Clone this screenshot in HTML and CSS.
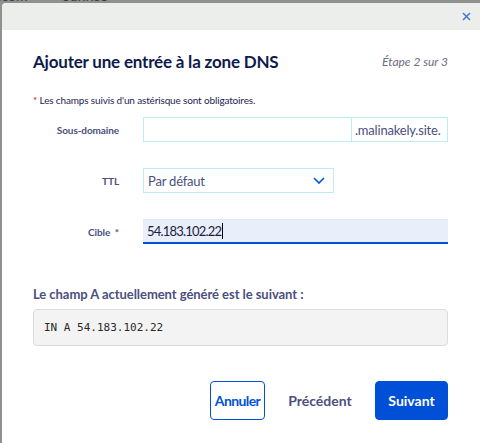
FILE: index.html
```html
<!DOCTYPE html>
<html lang="fr">
<head>
<meta charset="utf-8">
<link rel="stylesheet" href="styles.css">
</head>
<body>
<div class="bgnav"><span class="bg1">ecom</span><span class="bg2">Sunrise</span></div>
<div class="modal">
  <div class="modal-head">
    <svg class="close" width="9" height="9" viewBox="0 0 9 9"><path d="M1 1L8 8M8 1L1 8" stroke="#4a78d0" stroke-width="1.6" fill="none"/></svg>
  </div>
  <div class="modal-body">
    <div class="title-row">
      <h1 class="title">Ajouter une entrée à la zone DNS</h1>
      <span class="step">Étape 2 sur 3</span>
    </div>
    <p class="note"><span class="req">*</span> Les champs suivis d'un astérisque sont obligatoires.</p>
    <div class="form">
      <label class="lbl">Sous-domaine</label>
      <div class="field-group">
        <div class="input"></div>
        <div class="suffix">.malinakely.site.</div>
      </div>
      <label class="lbl">TTL</label>
      <div class="select">
        <span>Par défaut</span>
        <svg width="12" height="7" viewBox="0 0 12 7"><path d="M1 1L6 6L11 1" stroke="#0050d7" stroke-width="1.6" fill="none"/></svg>
      </div>
      <label class="lbl">Cible&nbsp; *</label>
      <div class="input active"><span class="num">54.183.102.22</span><span class="caret"></span></div>
    </div>
    <h2 class="sub">Le champ A actuellement généré est le suivant :</h2>
    <div class="code">IN A 54.183.102.22</div>
    <div class="actions">
      <button class="btn btn-outline">Annuler</button>
      <button class="btn btn-link">Précédent</button>
      <button class="btn btn-primary">Suivant</button>
    </div>
  </div>
</div>
</body>
</html>
```
FILE: styles.css
```css
html, body {
  margin: 0;
  padding: 0;
}
body {
  width: 480px;
  height: 443px;
  overflow: hidden;
  background: #8f9090;
  font-family: Lato, "Liberation Sans", sans-serif;
}
.bgnav {
  height: 3px;
  overflow: hidden;
  display: flex;
  align-items: flex-end;
  font-size: 14px;
  line-height: 14px;
  color: #3d3d3d;
}
.bg1 { margin-left: -6px; }
.bg2 { margin-left: 35px; }
.modal {
  margin-left: 2px;
  width: 478px;
  height: 440px;
  background: #fff;
  border-radius: 4px 0 0 0;
  overflow: hidden;
}
.modal-head {
  height: 27px;
  background: #eceeec;
  display: flex;
  align-items: center;
  justify-content: flex-end;
  padding-right: 9px;
}
.close { display: block; }
.modal-body {
  padding: 0 32px 0 31px;
}
.title-row {
  display: flex;
  justify-content: space-between;
  align-items: center;
  margin-top: 19px;
  height: 24px;
}
.title {
  margin: 0;
  font-size: 17px;
  letter-spacing: -0.2px;
  font-weight: 700;
  color: #0e1a4c;
}
.step {
  font-size: 12px;
  font-style: italic;
  color: #6b6e80;
}
.note {
  margin: 20px 0 0 0;
  font-size: 10px;
  letter-spacing: -0.15px;
  line-height: 14px;
  color: #1d2550;
}
.req { color: #e2001a; }
.form {
  margin-top: 10px;
  display: grid;
  grid-template-columns: 86px 1fr;
  column-gap: 24px;
  row-gap: 26px;
  align-items: center;
}
.lbl {
  text-align: right;
  font-size: 10px;
  letter-spacing: -0.1px;
  font-weight: 700;
  color: #4b4f7e;
}
.field-group {
  display: flex;
}
.input {
  box-sizing: border-box;
  height: 25px;
  border: 1px solid #bdebf8;
  width: 209px;
  display: flex;
  align-items: center;
  padding-left: 4px;
  font-size: 13px;
  color: #1b1d3a;
}
.suffix {
  box-sizing: border-box;
  height: 25px;
  width: 96px;
  border: 1px solid #bdebf8;
  border-left: none;
  display: flex;
  align-items: center;
  padding-left: 3px;
  font-size: 13px;
  letter-spacing: -0.2px;
  color: #4b4f7e;
}
.select {
  box-sizing: border-box;
  height: 25px;
  width: 191px;
  border: 1px solid #bdebf8;
  display: flex;
  align-items: center;
  justify-content: space-between;
  padding: 0 8px 0 4px;
  font-size: 13px;
  letter-spacing: -0.2px;
  color: #4b4f7e;
}
.input.active {
  width: 305px;
  background: #e8eefa;
  border: none;
  border-top: 1px solid #dfe8f8;
  border-bottom: 2px solid #0050d7;
}
.num {
  letter-spacing: -0.8px;
}
.caret {
  display: inline-block;
  margin-left: 1px;
  width: 1px;
  height: 16px;
  background: #000;
}
.sub {
  margin: 42px 0 0 0;
  font-size: 13px;
  letter-spacing: -0.05px;
  font-weight: 700;
  color: #4b4f7e;
}
.code {
  box-sizing: border-box;
  margin-top: 7px;
  height: 37px;
  background: #f3f3f3;
  border: 1px solid #dcdcdc;
  border-radius: 4px;
  padding-left: 10px;
  display: flex;
  align-items: center;
  font-family: "DejaVu Sans Mono", monospace;
  font-size: 11px;
  color: #2a2a2a;
}
.actions {
  margin-top: 35px;
  display: flex;
  justify-content: flex-end;
  align-items: center;
}
.btn {
  box-sizing: border-box;
  height: 39px;
  font-family: inherit;
  font-size: 14px;
  font-weight: 700;
  border-radius: 4px;
  cursor: pointer;
}
.btn-outline {
  width: 55px;
  padding: 0;
  background: #fff;
  color: #0050d7;
  border: 1px solid #0050d7;
  letter-spacing: -0.6px;
}
.btn-link {
  margin: 0 10px 0 10px;
  width: 90px;
  padding: 0;
  background: none;
  border: none;
  color: #4b4f7e;
}
.btn-primary {
  width: 73px;
  padding: 0;
  background: #0050d7;
  border: 1px solid #0050d7;
  color: #fff;
}
```
